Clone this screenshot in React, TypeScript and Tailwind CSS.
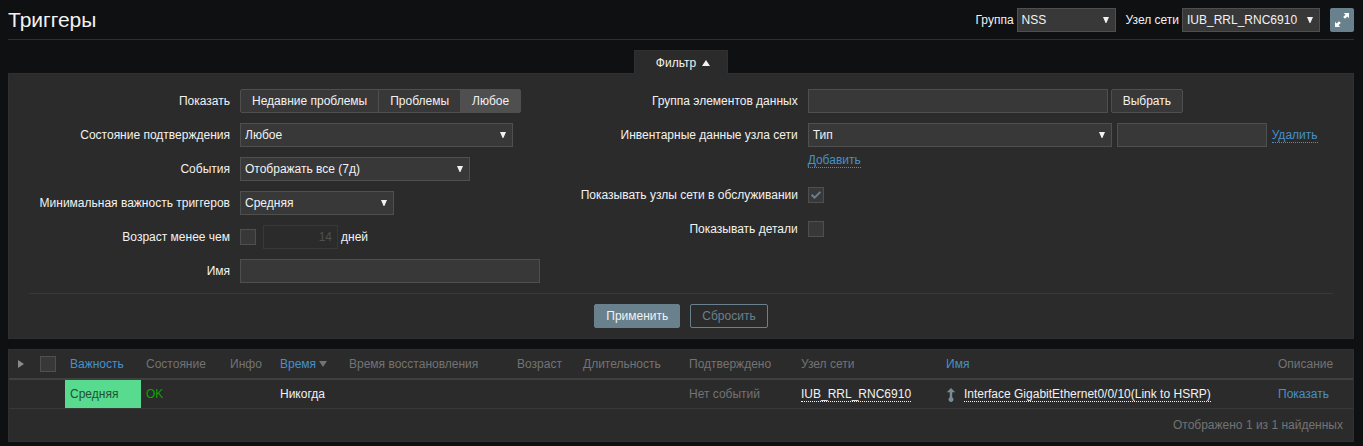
import { useState, type ReactNode } from "react";
import { clsx } from "clsx";

const field = "h-6 border border-[#4f4f4f] bg-[#383838] text-[#f2f2f2] outline-none";
const dotted = "border-b border-dotted";

function Select({ id, label, options, className }: { id: string; label?: string; options: string[]; className?: string }) {
  return (
    <span className={clsx("relative inline-flex", className)}>
      <select id={id} aria-label={label} className={clsx(field, "w-full appearance-none pl-1 pr-4")}>
        {options.map((o) => (
          <option key={o}>{o}</option>
        ))}
      </select>
      <svg viewBox="0 0 6 6" className="pointer-events-none absolute right-[7px] top-[9px] h-1.5 w-1.5 fill-[#f2f2f2]">
        <path d="M0 0h6L3.4 6h-.8z" />
      </svg>
    </span>
  );
}

function Checkbox({ id, label, defaultChecked }: { id?: string; label?: string; defaultChecked?: boolean }) {
  return (
    <span className="relative inline-flex h-4 w-4 shrink-0">
      <input
        type="checkbox"
        id={id}
        aria-label={label}
        defaultChecked={defaultChecked}
        className="peer h-4 w-4 appearance-none border border-[#4f4f4f] bg-[#383838]"
      />
      <svg
        viewBox="0 0 16 16"
        className="pointer-events-none absolute inset-0 hidden fill-none stroke-[#69808d] stroke-2 peer-checked:block"
      >
        <path d="M3.6 7.7l3 3 5.8-5.8" />
      </svg>
    </span>
  );
}

function Row({ label, htmlFor, wide, children }: { label: string; htmlFor?: string; wide?: boolean; children: ReactNode }) {
  const labelClass = clsx("shrink-0 whitespace-nowrap text-right leading-6", wide ? "w-[217px]" : "w-[201px]");
  return (
    <div className="flex gap-2.5">
      {htmlFor ? (
        <label htmlFor={htmlFor} className={labelClass}>{label}</label>
      ) : (
        <span className={labelClass}>{label}</span>
      )}
      <div>{children}</div>
    </div>
  );
}

function ShowSwitch() {
  const [value, setValue] = useState("Любое");
  return (
    <div role="radiogroup" aria-label="Показать" className="flex">
      {["Недавние проблемы", "Проблемы", "Любое"].map((o, i) => (
        <label
          key={o}
          className={clsx(
            "relative h-6 whitespace-nowrap border border-[#4f4f4f] px-[11px] leading-[22px]",
            i > 0 && "-ml-px",
            i === 0 && "rounded-l-xs",
            i === 2 && "rounded-r-xs",
            value === o ? "bg-[#4f4f4f]" : "bg-[#383838]",
          )}
        >
          <input type="radio" name="show" className="sr-only" checked={value === o} onChange={() => setValue(o)} />
          {o}
        </label>
      ))}
    </div>
  );
}

function Header() {
  return (
    <header className="flex items-center border-b border-[#303030] pb-[7px]">
      <h1 className="flex-1 text-[21px] leading-6">Триггеры</h1>
      <div className="flex items-center gap-2.5">
        <div className="flex items-center gap-[3px]">
          <label htmlFor="group">Группа</label>
          <Select id="group" options={["NSS"]} className="w-[99px]" />
        </div>
        <div className="flex items-center gap-[3px]">
          <label htmlFor="host">Узел сети</label>
          <Select id="host" options={["IUB_RRL_RNC6910"]} className="w-[138px]" />
        </div>
        <button type="button" aria-label="Полноэкранный режим" className="h-6 w-6 rounded-xs bg-[#69808d]">
          <svg viewBox="0 0 24 24" className="h-6 w-6 fill-white">
            <path d="M13.8 5H19v5.2l-1.7-1.7-2.3 2.3-1.8-1.8 2.3-2.3zM10.2 19H5v-5.2l1.7 1.7L9 13.2l1.8 1.8-2.3 2.3z" />
          </svg>
        </button>
      </div>
    </header>
  );
}

function Filter() {
  return (
    <section className="mt-2.5">
      <div className="flex justify-center">
        <button type="button" className="relative -mb-px flex h-6 items-center gap-1.5 border border-b-0 border-[#303030] bg-[#2b2b2b] pl-[21px] pr-[17px]">
          Фильтр
          <svg viewBox="0 0 8 6" className="h-1.5 w-2 fill-[#f2f2f2]">
            <path d="M4 0l4 6H0z" />
          </svg>
        </button>
      </div>
      <form onSubmit={(e) => e.preventDefault()} className="border border-[#303030] bg-[#2b2b2b] px-5 pb-2.5 pt-[15px]">
        <div className="grid grid-cols-[11fr_15fr] border-b border-[#383838] pb-2.5">
          <div className="flex flex-col gap-2.5">
            <Row label="Показать"><ShowSwitch /></Row>
            <Row label="Состояние подтверждения" htmlFor="ack">
              <Select id="ack" options={["Любое"]} className="w-[273px]" />
            </Row>
            <Row label="События" htmlFor="events">
              <Select id="events" options={["Отображать все (7д)"]} className="w-[230px]" />
            </Row>
            <Row label="Минимальная важность триггеров" htmlFor="severity">
              <Select id="severity" options={["Средняя"]} className="w-[154px]" />
            </Row>
            <Row label="Возраст менее чем" htmlFor="age">
              <div className="flex items-center">
                <Checkbox id="age" />
                <input
                  disabled
                  aria-label="Возраст, дней"
                  defaultValue="14"
                  className="ml-[7px] mr-[3px] h-6 w-[75px] border border-[#383838] bg-transparent px-[5px] text-right text-[#4f4f4f]"
                />
                дней
              </div>
            </Row>
            <Row label="Имя" htmlFor="name">
              <input id="name" type="text" className={clsx(field, "block w-[300px] px-[5px]")} />
            </Row>
          </div>
          <div className="flex flex-col gap-2.5">
            <Row wide label="Группа элементов данных" htmlFor="application">
              <div className="flex gap-[3px]">
                <input id="application" type="text" className={clsx(field, "w-[300px] px-[5px]")} />
                <button type="button" className={clsx(field, "rounded-xs px-[11px]")}>Выбрать</button>
              </div>
            </Row>
            <Row wide label="Инвентарные данные узла сети" htmlFor="inventory">
              <div className="flex items-center gap-[5px]">
                <Select id="inventory" options={["Тип"]} className="w-[304px]" />
                <input type="text" aria-label="Значение" className={clsx(field, "w-[150px] px-[5px]")} />
                <a href="#remove" className={clsx(dotted, "leading-[14px] text-[#4790c8]")}>Удалить</a>
              </div>
              <div className="h-[26px] leading-[26px]">
                <a href="#add" className={clsx(dotted, "text-[#4790c8]")}>Добавить</a>
              </div>
            </Row>
            <Row wide label="Показывать узлы сети в обслуживании" htmlFor="maintenance">
              <div className="flex h-6 items-center"><Checkbox id="maintenance" defaultChecked /></div>
            </Row>
            <Row wide label="Показывать детали" htmlFor="details">
              <div className="flex h-6 items-center"><Checkbox id="details" /></div>
            </Row>
          </div>
        </div>
        <div className="mt-2.5 flex justify-center gap-2.5">
          <button type="submit" className="h-6 rounded-xs border border-[#69808d] bg-[#69808d] px-[11px]">Применить</button>
          <button type="reset" className="h-6 rounded-xs border border-[#69808d] px-[11px] text-[#69808d]">Сбросить</button>
        </div>
      </form>
    </section>
  );
}

function TriggerTable() {
  return (
    <div className="mt-2.5 border border-[#303030] bg-[#2b2b2b]">
      <table className="w-full table-fixed border-collapse whitespace-nowrap text-left [&_td]:px-[5px] [&_th]:px-[5px] [&_th]:font-normal">
        <colgroup>
          <col className="w-[26px]" />
          <col className="w-[30px]" />
          <col className="w-[76px]" />
          <col className="w-[84px]" />
          <col className="w-[50px]" />
          <col className="w-[69px]" />
          <col className="w-[168px]" />
          <col className="w-[66px]" />
          <col className="w-[106px]" />
          <col className="w-[112px]" />
          <col className="w-[145px]" />
          <col />
          <col className="w-[80px]" />
        </colgroup>
        <thead className="text-[#737373]">
          <tr className="h-[29px] border-b-2 border-[#404040]">
            <th>
              <button type="button" aria-label="Развернуть" className="ml-1 block">
                <svg viewBox="0 0 6 8" className="h-2 w-1.5 fill-[#8a8a8a]"><path d="M0 0l6 4-6 4z" /></svg>
              </button>
            </th>
            <th><div className="flex"><Checkbox label="Выбрать все" /></div></th>
            <th><a href="#severity" className="text-[#4790c8]">Важность</a></th>
            <th>Состояние</th>
            <th>Инфо</th>
            <th>
              <a href="#time" className="flex items-center gap-[3px] text-[#4790c8]">
                Время
                <svg viewBox="0 0 8 6" className="h-1.5 w-2 shrink-0 fill-[#737373]"><path d="M0 0h8L4 6z" /></svg>
              </a>
            </th>
            <th>Время восстановления</th>
            <th>Возраст</th>
            <th>Длительность</th>
            <th>Подтверждено</th>
            <th>Узел сети</th>
            <th><a href="#name" className="text-[#4790c8]">Имя</a></th>
            <th>Описание</th>
          </tr>
        </thead>
        <tbody>
          <tr className="h-[29px] border-b border-[#383838]">
            <td />
            <td />
            <td className="bg-[#59db8f] text-[#1d5233]">Средняя</td>
            <td className="text-[#00aa00]">OK</td>
            <td />
            <td>Никогда</td>
            <td />
            <td />
            <td />
            <td className="text-[#737373]">Нет событий</td>
            <td><a href="#host" className={dotted}>IUB_RRL_RNC6910</a></td>
            <td>
              <svg viewBox="0 0 10 14" className="mr-2 inline-block h-3.5 w-2.5 fill-[#768d99] align-middle">
                <path d="M5 0l4.2 4.2H6.2v5a2.5 2.5 0 1 1-2.4 0v-5H.8z" />
              </svg>
              <a href="#trigger" className={dotted}>Interface GigabitEthernet0/0/10(Link to HSRP)</a>
            </td>
            <td><a href="#description" className="text-[#4790c8]">Показать</a></td>
          </tr>
        </tbody>
      </table>
      <div className="px-2.5 text-right leading-8 text-[#737373]">Отображено 1 из 1 найденных</div>
    </div>
  );
}

export default function App() {
  return (
    <div className="min-h-screen bg-[#0e1012] pb-1 pl-2 pr-[9px] pt-2 font-['Liberation_Sans',Arial,sans-serif] text-[12px] leading-[18px] text-[#f2f2f2]">
      <Header />
      <Filter />
      <TriggerTable />
    </div>
  );
}
